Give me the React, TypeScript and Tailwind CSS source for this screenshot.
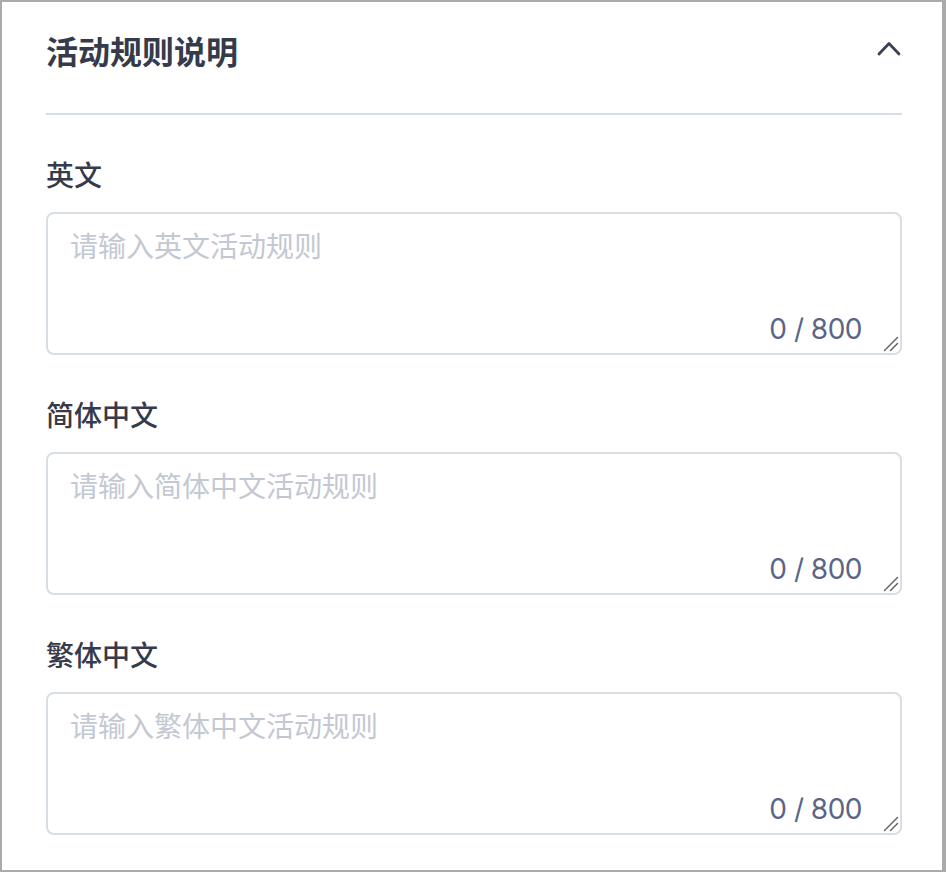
import React from "react";

const FONT = {
  fontFamily: '"Inter", "Noto Sans CJK SC", sans-serif',
};

function Field({ label, placeholder }: { label: string; placeholder: string }) {
  return (
    <div className="mt-[41px]">
      <div className="text-[28px] leading-[40px] font-medium text-[#363a4a]">{label}</div>
      <div className="relative mt-[16px]">
        <textarea
          placeholder={placeholder}
          style={FONT}
          className="block w-full h-[143px] rounded-[8px] border-2 border-[#d7dee6] bg-white px-[22px] pt-[13px] text-[28px] leading-[40px] text-[#363a4a] placeholder:text-[#c3c8d2] outline-none resize-none"
        />
        <div className="absolute right-[40px] bottom-[12px] text-[28px] leading-[28px] tracking-[-0.5px] text-[#5b6585] pointer-events-none">
          0 / 800
        </div>
        <svg
          width="16"
          height="16"
          viewBox="0 0 16 16"
          className="absolute right-[3px] bottom-[3px] pointer-events-none"
          stroke="#5f5f5f"
          strokeWidth="1.4"
          strokeLinecap="round"
        >
          <line x1="1.5" y1="14.5" x2="14.5" y2="1.5" />
          <line x1="7.5" y1="14.5" x2="14.5" y2="7.5" />
        </svg>
      </div>
    </div>
  );
}

export default function App() {
  return (
    <div
      style={FONT}
      className="w-[946px] h-[872px] border-2 border-r-4 border-[#aaaaaa] bg-white pl-[44px] pr-[40px] box-border overflow-hidden"
    >
      <div className="flex items-start justify-between h-[113px] border-b-2 border-[#d5dde6] pt-[27px] box-border">
        <div className="text-[32px] leading-[48px] font-semibold text-[#363b4c]">活动规则说明</div>
        <svg
          width="24"
          height="15"
          viewBox="0 0 24 15"
          className="mt-[12px] mr-[1px]"
          fill="none"
          stroke="#3d4252"
          strokeWidth="2.8"
          strokeLinecap="round"
          strokeLinejoin="round"
        >
          <polyline points="2,13 12,2.5 22,13" />
        </svg>
      </div>
      <Field label="英文" placeholder="请输入英文活动规则" />
      <Field label="简体中文" placeholder="请输入简体中文活动规则" />
      <Field label="繁体中文" placeholder="请输入繁体中文活动规则" />
    </div>
  );
}
